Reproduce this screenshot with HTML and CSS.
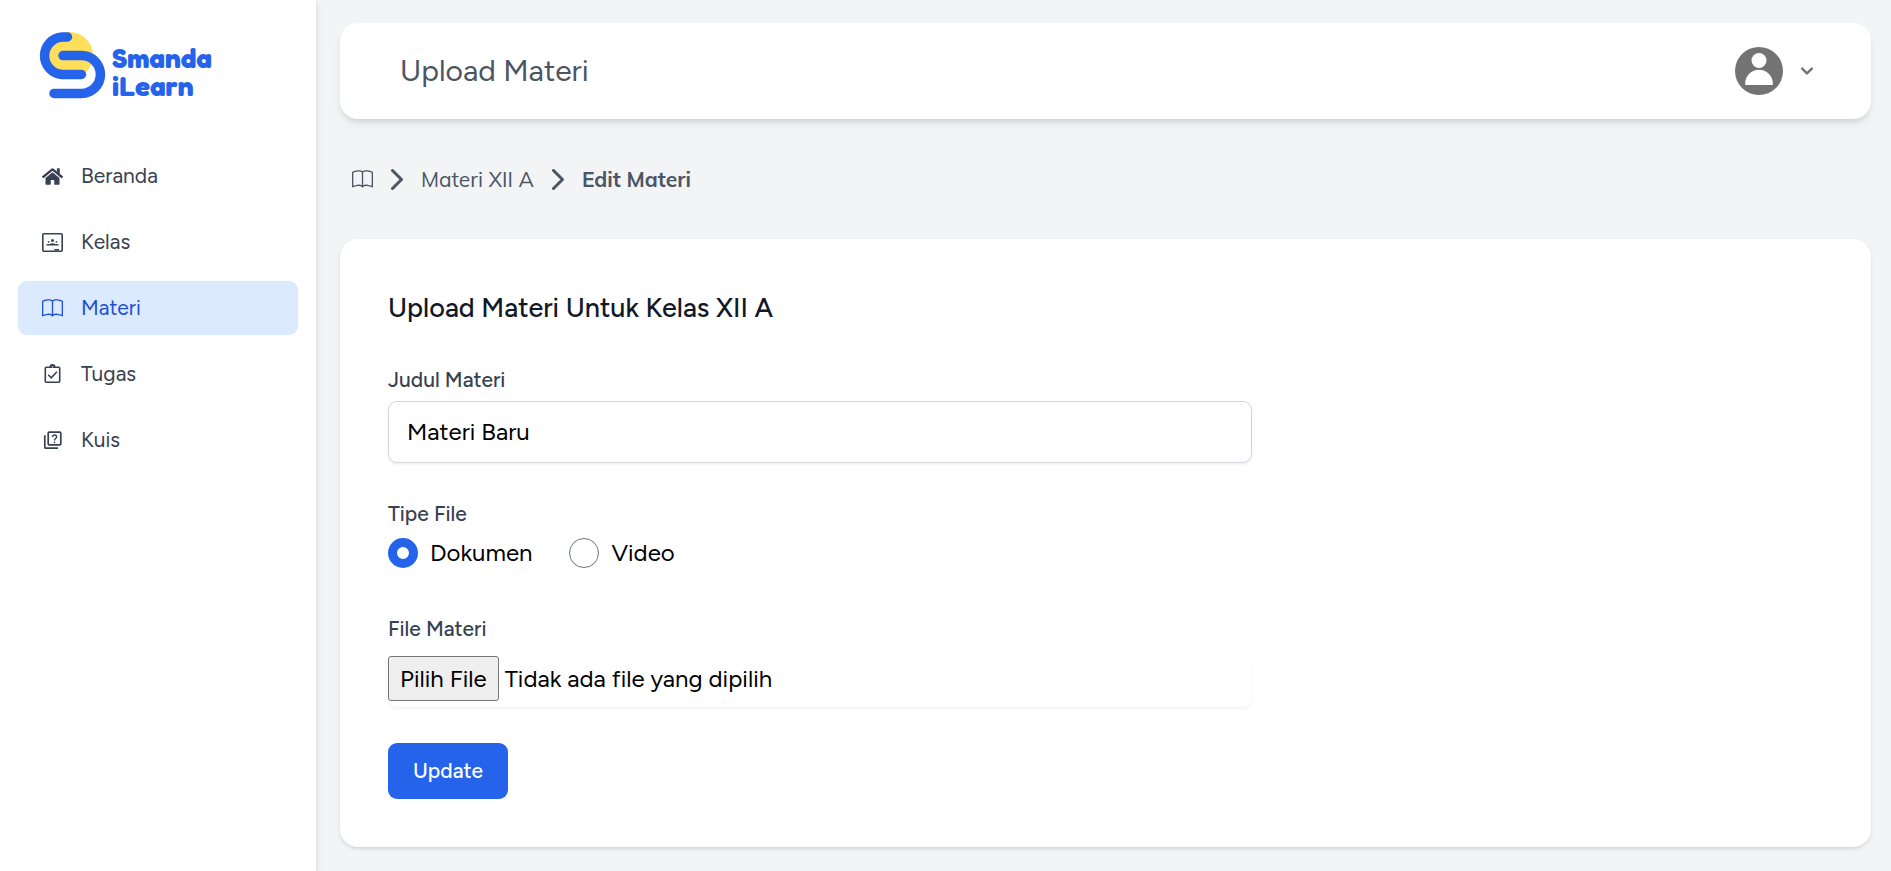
FILE: index.html
```html
<!DOCTYPE html>
<html lang="id">
<head>
<meta charset="utf-8">
<meta name="viewport" content="width=device-width, initial-scale=1">
<title>Upload Materi</title>
<link rel="stylesheet" href="styles.css">
</head>
<body>
<svg class="defs" aria-hidden="true">
  <symbol id="book" viewBox="0 0 16 16"><path fill="currentColor" d="M1 2.828c.885-.37 2.154-.769 3.388-.893 1.33-.134 2.458.063 3.112.752v9.746c-.935-.53-2.12-.603-3.213-.493-1.18.12-2.37.461-3.287.811zm7.5-.141c.654-.689 1.782-.886 3.112-.752 1.234.124 2.503.523 3.388.893v9.923c-.918-.35-2.107-.692-3.287-.81-1.094-.111-2.278-.039-3.213.492zM8 1.783C7.015.936 5.587.81 4.287.94c-1.514.153-3.042.672-3.994 1.105A.5.5 0 0 0 0 2.5v11a.5.5 0 0 0 .707.455c.882-.4 2.303-.881 3.68-1.02 1.409-.142 2.59.087 3.223.877a.5.5 0 0 0 .78 0c.633-.79 1.814-1.019 3.222-.877 1.378.139 2.8.62 3.681 1.02A.5.5 0 0 0 16 13.5v-11a.5.5 0 0 0-.293-.455c-.952-.433-2.48-.952-3.994-1.105C10.413.809 8.985.936 8 1.783"/></symbol>
</svg>
<div class="app">
  <aside class="sidebar">
    <a class="logo" href="#" aria-label="Smanda iLearn">
      <svg width="180" height="72" viewBox="0 0 180 72">
        <circle cx="34.5" cy="26.5" r="23.5" fill="#ffde59"/>
        <g fill="none" stroke="#2563eb" stroke-width="9.5" stroke-linecap="round">
          <path d="M32.500 8H27A18.8 18.8 0 0 0 27 45.5H46.500"/>
          <path d="M28 26.6H46.5A18.8 18.8 0 0 1 46.5 64.4H19"/>
        </g>
        <text class="logo-text" x="77" y="39">Smanda</text>
        <text class="logo-text" x="77" y="67">iLearn</text>
      </svg>
    </a>
    <nav class="menu">
      <a class="menu-item" href="#">
        <svg class="icon" viewBox="0 0 576 512"><path fill="currentColor" d="M280.37 148.26L96 300.11V464a16 16 0 0 0 16 16l112.06-.29a16 16 0 0 0 15.92-16V368a16 16 0 0 1 16-16h64a16 16 0 0 1 16 16v95.64a16 16 0 0 0 16 16.05L464 480a16 16 0 0 0 16-16V300L295.67 148.26a12.19 12.19 0 0 0-15.3 0zM571.6 251.47L488 182.56V44.05a12 12 0 0 0-12-12h-56a12 12 0 0 0-12 12v72.61L318.47 43a48 48 0 0 0-61 0L4.34 251.47a12 12 0 0 0-1.6 16.9l25.5 31A12 12 0 0 0 45.15 301l235.22-193.74a12.19 12.19 0 0 1 15.3 0L530.9 301a12 12 0 0 0 16.9-1.6l25.5-31a12 12 0 0 0-1.7-16.93z"/></svg>
        Beranda
      </a>
      <a class="menu-item" href="#">
        <svg class="icon" viewBox="0 0 21 21"><rect x=".8" y="1.8" width="19.4" height="17.400" rx="1" fill="none" stroke="currentColor" stroke-width="1.600"/><g fill="currentColor"><circle cx="10.5" cy="8.4" r="1.5"/><circle cx="6.600" cy="9.800" r=".9"/><circle cx="14.400" cy="9.800" r=".9"/><path d="M4.200 13.500c0-1.200 1.600-1.700 3.300-1.300 1.600-1.200 4.400-1.200 6 0 1.700-.4 3.300.1 3.300 1.300zM12.300 17h4.700v1.500h-4.700z"/></g></svg>
        Kelas
      </a>
      <a class="menu-item active" href="#" aria-current="page">
        <svg class="icon"><use href="#book"/></svg>
        Materi
      </a>
      <a class="menu-item" href="#">
        <svg class="icon" viewBox="0 0 21 21" fill="none" stroke="currentColor" stroke-width="1.600"><rect x="3.300" y="3.300" width="14.400" height="15" rx="1"/><path d="M6.200 10.800l3 3 5.700-6"/><path fill="currentColor" stroke="none" d="M7.500 3a3 3 0 0 1 6 0z"/><circle cx="10.500" cy="2.900" r=".7" fill="#fff" stroke="none"/></svg>
        Tugas
      </a>
      <a class="menu-item" href="#">
        <svg class="icon" viewBox="0 0 21 21" fill="none" stroke="currentColor" stroke-width="1.700"><rect x="6.200" y="2.200" width="12.600" height="12.600" rx="1"/><path d="M2.800 5.200v12a1 1 0 0 0 1 1h12.200"/><path stroke-width="1.400" d="M10.400 6.900c.2-2.500 4.200-2.500 4.200 0 0 1.600-2.100 1.600-2.100 3.500M12.500 11.500v1.400"/></svg>
        Kuis
      </a>
    </nav>
  </aside>
  <main class="main">
    <header class="topbar">
      <h1 class="page-title">Upload Materi</h1>
      <button class="profile" type="button" aria-label="Profil">
        <svg width="48" height="48" viewBox="0 0 48 48"><circle cx="24" cy="24" r="24" fill="#737373"/><circle cx="24" cy="13.500" r="7.500" fill="#fff"/><path fill="#fff" d="M10.200 38v-1.500a13.800 13.800 0 0 1 27.600 0V38z"/></svg>
        <svg width="24" height="24" viewBox="0 0 20 20"><path fill="#6b7280" fill-rule="evenodd" d="M5.293 7.293a1 1 0 0 1 1.414 0L10 10.586l3.293-3.293a1 1 0 1 1 1.414 1.414l-4 4a1 1 0 0 1-1.414 0l-4-4a1 1 0 0 1 0-1.414z"/></svg>
      </button>
    </header>
    <nav class="breadcrumb" aria-label="Breadcrumb">
      <a class="crumb" href="#" aria-label="Materi"><svg class="icon"><use href="#book"/></svg></a>
      <svg class="separator" viewBox="0 0 12 21"><path d="M1.500 1.500l9 9-9 9"/></svg>
      <a class="crumb" href="#">Materi XII A</a>
      <svg class="separator" viewBox="0 0 12 21"><path d="M1.500 1.500l9 9-9 9"/></svg>
      <span class="crumb current" aria-current="page">Edit Materi</span>
    </nav>
    <section class="card">
      <h2 class="card-title">Upload Materi Untuk Kelas XII A</h2>
      <form class="form">
        <div class="field">
          <label class="label" for="judul">Judul Materi</label>
          <input class="input" id="judul" type="text" value="Materi Baru">
        </div>
        <fieldset class="field">
          <legend class="label">Tipe File</legend>
          <div class="options">
            <label class="option"><input class="radio" type="radio" name="tipe" checked>Dokumen</label>
            <label class="option"><input class="radio" type="radio" name="tipe">Video</label>
          </div>
        </fieldset>
        <div class="field">
          <label class="label" for="file">File Materi</label>
          <div class="file">
            <span class="file-button">Pilih File</span>
            <span>Tidak ada file yang dipilih</span>
            <input class="file-input" id="file" type="file">
          </div>
        </div>
        <button class="submit" type="submit">Update</button>
      </form>
    </section>
  </main>
</div>
</body>
</html>
```
FILE: styles.css
```css
* {
  box-sizing: border-box;
}

body {
  margin: 0;
  background: #f3f4f6;
  color: #000;
  font: 400 24px/36px Figtree, Lato, "Open Sans", sans-serif;
}

.defs {
  display: none;
}

a {
  color: inherit;
  text-decoration: none;
}

.app {
  display: flex;
  min-height: 100vh;
}

.sidebar {
  flex: 0 0 316px;
  padding: 29px 18px;
  background: #fff;
  box-shadow: 0 2px 4px rgba(0, 0, 0, 0.1), 0 2px 8px rgba(0, 0, 0, 0.06);
}

.logo {
  display: block;
  padding-left: 17px;
  margin-bottom: 48px;
}

.logo svg {
  display: block;
}

.logo-text {
  font: 700 28px Fredoka, Nunito, Lato, sans-serif;
  fill: #2563eb;
}

.menu {
  display: flex;
  flex-direction: column;
  gap: 12px;
}

.menu-item {
  display: flex;
  align-items: center;
  gap: 18px;
  height: 54px;
  padding: 0 24px;
  border-radius: 9px;
  color: #374151;
  font-size: 21px;
}

.menu-item.active {
  background: #dbeafe;
  color: #1d4ed8;
}

.icon {
  display: block;
  flex: none;
  width: 21px;
  height: 21px;
}

.main {
  flex: 1;
  min-width: 0;
  padding: 23px 20px 24px 24px;
}

.topbar {
  display: flex;
  align-items: center;
  justify-content: space-between;
  height: 96px;
  padding: 0 52px 0 60px;
  border-radius: 18px;
  background: #fff;
  box-shadow: 0 6px 9px -2px rgba(0, 0, 0, 0.1), 0 3px 6px -3px rgba(0, 0, 0, 0.1);
}

.page-title {
  margin: 0;
  color: #4b5563;
  font-size: 30px;
  font-weight: 400;
}

.profile {
  display: flex;
  align-items: center;
  gap: 12px;
  padding: 0;
  border: 0;
  background: none;
}

.breadcrumb {
  display: flex;
  align-items: center;
  gap: 18px;
  height: 120px;
  padding-left: 12px;
  color: #4b5563;
  font-family: Mulish, Figtree, Lato, sans-serif;
  font-size: 21px;
}

.crumb.current {
  font-weight: 700;
}

.separator {
  width: 12px;
  height: 21px;
  fill: none;
  stroke: #4b5563;
  stroke-width: 3;
  stroke-linecap: round;
  stroke-linejoin: round;
}

.card {
  padding: 48px;
  border-radius: 18px;
  background: #fff;
  box-shadow: 0 2px 4px rgba(0, 0, 0, 0.1), 0 2px 3px -2px rgba(0, 0, 0, 0.1);
}

.card-title {
  margin: 0 0 36px;
  color: #111827;
  font-size: 27px;
  font-weight: 500;
  line-height: 42px;
}

.form {
  max-width: 864px;
}

.field {
  margin: 0 0 36px;
  padding: 0;
  border: 0;
}

.label {
  display: block;
  margin-bottom: 6px;
  padding: 0;
  color: #374151;
  font-size: 21px;
  font-weight: 500;
  line-height: 30px;
}

.input {
  display: block;
  width: 100%;
  height: 62px;
  padding: 0 18px 2px;
  border: 1px solid #d1d5db;
  border-radius: 9px;
  background: #fff;
  color: #000;
  font: inherit;
  box-shadow: 0 2px 3px rgba(0, 0, 0, 0.05);
}

.options {
  display: flex;
  gap: 37px;
  margin-bottom: 43px;
}

.option {
  display: flex;
  align-items: center;
  gap: 12px;
}

fieldset.field {
  margin-bottom: 0;
}

.radio {
  appearance: none;
  width: 30px;
  height: 30px;
  margin: 0;
  border: 1px solid #6b7280;
  border-radius: 50%;
  background: #fff;
}

.radio:checked {
  border: 9px solid #2563eb;
}

.file {
  display: flex;
  position: relative;
  align-items: center;
  gap: 6px;
  height: 57px;
  border-radius: 9px;
  box-shadow: 0 2px 3px rgba(0, 0, 0, 0.05);
}

.file-button {
  padding: 4px 11px 3px;
  border: 1px solid #767676;
  border-radius: 3px;
  background: #efefef;
}

.file-input {
  position: absolute;
  inset: 0;
  width: 100%;
  opacity: 0;
}

.submit {
  display: block;
  height: 56px;
  padding: 0 25px;
  border: 0;
  border-radius: 9px;
  background: #2563eb;
  color: #fff;
  font: inherit;
  font-size: 21px;
  font-weight: 500;
}
```
